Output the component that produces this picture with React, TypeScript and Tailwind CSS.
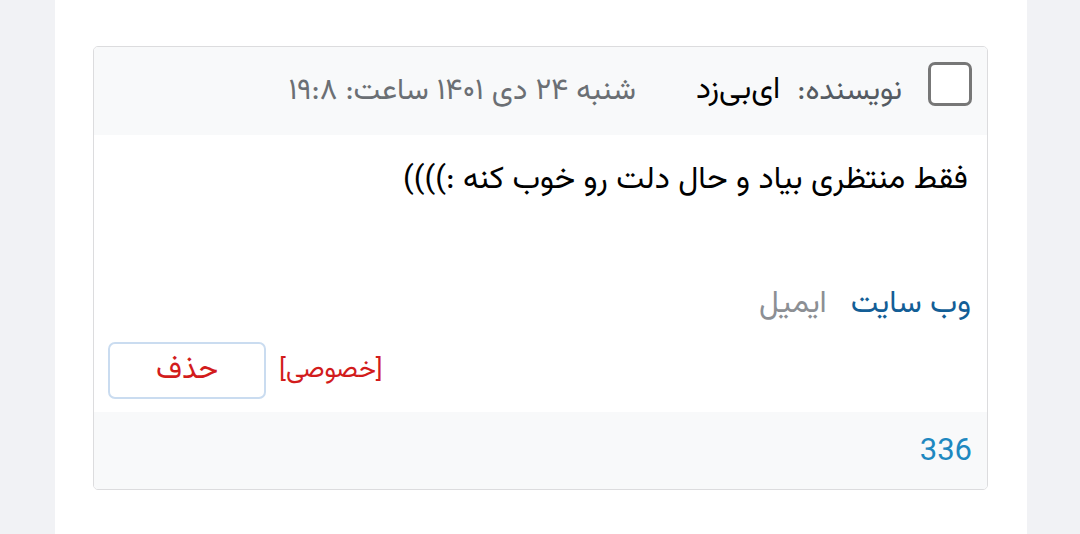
export default function App() {
  const font = { fontFamily: '"Vazirmatn", "Noto Sans Arabic", "DejaVu Sans", "Noto Sans", sans-serif' };
  return (
    <div className="flex h-[534px] w-[1080px] bg-[#f1f2f5] pl-[55px]" style={font}>
      <div className="w-[972px] bg-white pt-[46px] pr-[39px] pl-[38px]" dir="rtl">
        <div className="overflow-hidden rounded-[5px] border border-[#dcdcde]">
          <div className="flex h-[88px] items-center bg-[#f8f9fa] pr-[15px]">
            <span className="mb-[14px] h-[44px] w-[44px] rounded-[7px] border-[3px] border-[#777777] bg-white" />
            <span className="mr-[26px] text-[30px] text-[#555b62]">نویسنده:</span>
            <span className="mr-[17px] text-[31px] text-black">ای‌بی‌زد</span>
            <span className="mr-[60px] text-[30px] text-[#6b6f74]">شنبه ۲۴ دی ۱۴۰۱ ساعت: ۱۹:۸</span>
          </div>
          <div className="flex h-[277px] flex-col bg-white pr-[19px] pl-[14px]">
            <p className="mt-[22px] text-[31.5px] text-black">فقط منتظری بیاد و حال دلت رو خوب کنه :))))</p>
            <div className="mt-auto mr-[-3px] flex gap-[24px] text-[31px]">
              <span className="text-[#135e96]">وب سایت</span>
              <span className="text-[#8c8f94]">ایمیل</span>
            </div>
            <div className="mt-[14px] mb-[13px] flex items-center justify-end gap-[13px]">
              <span className="text-[26px] text-[#d21c1c]">[خصوصی]</span>
              <button className="flex h-[57px] w-[158px] items-center justify-center rounded-[7px] border-2 border-[#cadcf0] bg-white text-[30px] text-[#d21c1c]">
                حذف
              </button>
            </div>
          </div>
          <div className="flex h-[77px] items-center bg-[#f8f9fa] pr-[15px]">
            <span className="text-[31px] text-[#1e88c0]" style={{ fontFamily: '"Roboto", sans-serif' }}>
              336
            </span>
          </div>
        </div>
      </div>
    </div>
  );
}
